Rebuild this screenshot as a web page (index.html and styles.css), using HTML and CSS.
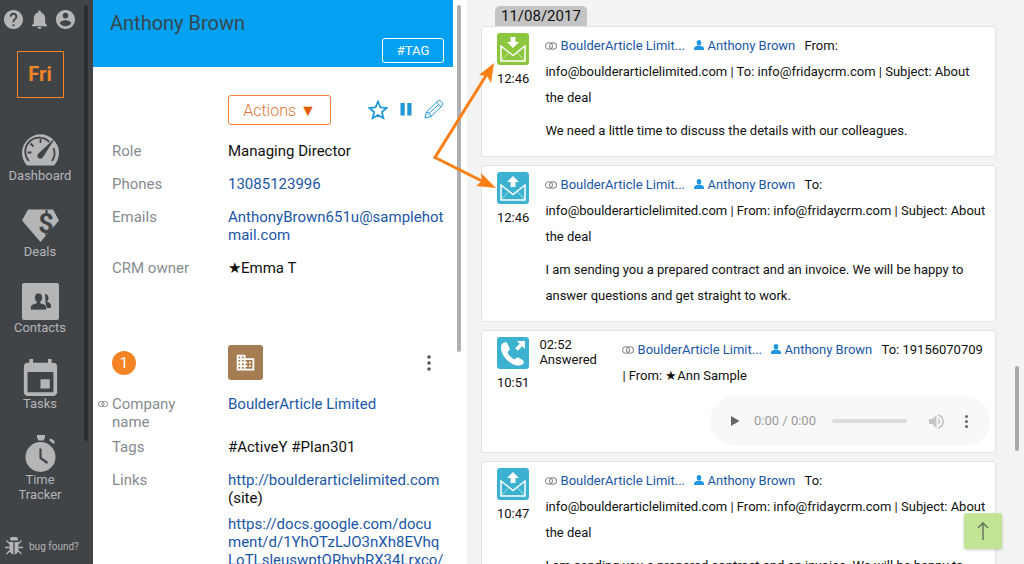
FILE: index.html
```
<!DOCTYPE html>
<html lang="en">
<head>
    <meta charset="UTF-8">
    <meta name="viewport" content="width=device-width, initial-scale=1.0">
    <title>Anthony Brown - Friday CRM</title>
    <link rel="stylesheet" href="styles.css">
</head>
<body>
    <!-- Shared icons -->
    <svg class="sprite" aria-hidden="true">
        <symbol id="link" viewBox="0 0 12 8">
            <rect x="0.6" y="0.8" width="6.8" height="6.4" rx="3.2" fill="none" stroke="currentColor" stroke-width="1.1"/>
            <rect x="4.6" y="0.8" width="6.8" height="6.4" rx="3.2" fill="none" stroke="currentColor" stroke-width="1.1"/>
        </symbol>
        <symbol id="person" viewBox="0 0 10 10">
            <ellipse cx="5" cy="2.700" rx="2.300" ry="2.700" fill="currentColor"/>
            <path d="M0 10V8.500C0 6.800 1.500 6.200 3.500 5.700h3C8.500 6.200 10 6.800 10 8.500V10z" fill="currentColor"/>
        </symbol>
        <symbol id="mail-in" viewBox="0 0 32 32">
            <path d="M4 28l8-9M28 28l-8-9" fill="none" stroke="#fff" stroke-opacity=".5" stroke-width="1"/>
            <path d="M4 13v15h24V13L16 22.500z" fill="none" stroke="#fff" stroke-width="1.500"/>
            <path d="M13.500 4h5v5h3.500l-6 6-6-6h3.500z" fill="#fff"/>
        </symbol>
        <symbol id="mail-out" viewBox="0 0 32 32">
            <path d="M4 28l8-9M28 28l-8-9" fill="none" stroke="#fff" stroke-opacity=".5" stroke-width="1"/>
            <path d="M4 13v15h24V13L16 22.500z" fill="none" stroke="#fff" stroke-width="1.500"/>
            <path d="M13.500 15v-5H10l6-6 6 6h-3.500v5z" fill="#fff"/>
        </symbol>
        <symbol id="more" viewBox="0 0 6 18">
            <circle cx="3" cy="3" r="1.800"/><circle cx="3" cy="9" r="1.800"/><circle cx="3" cy="15" r="1.800"/>
        </symbol>
    </svg>

    <nav class="sidebar">
        <div class="top-icons">
            <button aria-label="Help"><svg viewBox="2 2 20 20"><path d="M12 2C6.480 2 2 6.480 2 12s4.480 10 10 10 10-4.480 10-10S17.520 2 12 2zm1 17h-2v-2h2v2zm2.070-7.750l-.9.920C13.450 12.900 13 13.500 13 15h-2v-.5c0-1.100.45-2.100 1.170-2.830l1.240-1.260c.37-.36.590-.86.590-1.410 0-1.100-.9-2-2-2s-2 .9-2 2H8c0-2.210 1.790-4 4-4s4 1.790 4 4c0 .88-.36 1.680-.93 2.250z"/></svg></button>
            <button aria-label="Notifications"><svg viewBox="2 2 20 20"><path d="M12 22c1.100 0 2-.9 2-2h-4c0 1.100.9 2 2 2zm6-6v-5c0-3.070-1.640-5.640-4.500-6.320V4c0-.83-.67-1.500-1.500-1.500s-1.500.67-1.500 1.500v.68C7.630 5.360 6 7.920 6 11v5l-2 2v1h16v-1l-2-2z"/></svg></button>
            <button aria-label="Account"><svg viewBox="2 2 20 20"><path d="M12 2C6.480 2 2 6.480 2 12s4.480 10 10 10 10-4.480 10-10S17.520 2 12 2zm0 3c1.660 0 3 1.340 3 3s-1.340 3-3 3-3-1.340-3-3 1.340-3 3-3zm0 14.200c-2.500 0-4.710-1.280-6-3.220.03-1.990 4-3.080 6-3.080 1.990 0 5.970 1.090 6 3.080-1.290 1.940-3.500 3.220-6 3.220z"/></svg></button>
        </div>
        <a class="logo" href="#">Fri</a>
        <ul class="menu">
            <li><a href="#">
                <svg viewBox="0 0 37 37">
                    <path d="M5 34.500A18.500 18.500 0 1 1 32 34.500z"/>
                    <g fill="none" stroke="#414447" stroke-width="1.800">
                        <path d="M7 30A13.500 13.500 0 0 1 27.500 11M31.500 17a13.500 13.500 0 0 1 -1.500 13M18.500 8v4M8.500 12.500l3 3M5.500 21.500h4"/>
                    </g>
                    <path d="M33.500 6.500L20.800 26.600a3 3 0 1 1-4.300-4.100z" fill="#414447"/>
                </svg>
                <span>Dashboard</span></a></li>
            <li><a href="#">
                <svg viewBox="0 0 37 37">
                    <path d="M6 2.500h25l6 11L18.500 35 0 13.500z"/>
                    <text x="24" y="26" text-anchor="middle" class="dollar">$</text>
                </svg>
                <span>Deals</span></a></li>
            <li><a href="#">
                <svg viewBox="0 0 37 37">
                    <rect width="37" height="37" rx="2"/>
                    <g fill="#414447">
                        <path d="M23 11c2.200 0 3.500 1.700 3.500 4 0 1.700-.7 3-1.600 3.800 2.600.7 4.100 1.700 4.100 4V25h-5z"/>
                        <path d="M16.500 10c2.500 0 4 2 4 4.500 0 2-.8 3.600-2 4.500v1c3.500.7 6 1.900 6 4.600v2.400h-16v-2.400c0-2.700 2.500-3.900 6-4.600v-1c-1.200-.9-2-2.500-2-4.500 0-2.500 1.500-4.500 4-4.500z" stroke="#b4b5b7" stroke-width=".8"/>
                    </g>
                </svg>
                <span>Contacts</span></a></li>
            <li><a href="#">
                <svg viewBox="3 1 18 20"><path d="M17 12h-5v5h5v-5zM16 1v2H8V1H6v2H5c-1.110 0-1.990.9-1.990 2L3 19c0 1.100.89 2 2 2h14c1.100 0 2-.9 2-2V5c0-1.100-.9-2-2-2h-1V1h-2zm3 18H5V8h14v11z"/></svg>
                <span>Tasks</span></a></li>
            <li><a href="#">
                <svg viewBox="0 0 37 37">
                    <path d="M15 0h8v2.500l-1.500 3h-5L15 2.500z"/>
                    <path d="M27 5l2-1.500 4 3-1.500 2.500z"/>
                    <circle cx="18.500" cy="22" r="15"/>
                    <path d="M18.500 13.500v9.500l7 5" fill="none" stroke="#414447" stroke-width="2.200"/>
                </svg>
                <span>Time Tracker</span></a></li>
        </ul>
        <a class="bug" href="#">
            <svg viewBox="0 0 18 18">
                <path d="M5 3.500a4 4 0 0 1 8 0zM4.500 5H8.400v12.500C5.500 17 4.500 14.500 4.500 11zM9.600 5h3.900v6c0 3.500-1 6-3.900 6.500z"/>
                <path d="M5 7L1.500 3.500M4.500 10.500H0M5 13.500L1.500 17M13 7l3.500-3.500M13.500 10.500H18M13 13.500l3.500 3.500M6.500 2L5.500.5M11.500 2l1-1.500" fill="none" stroke="#b4b5b7" stroke-width="1.300"/>
            </svg>
            <span>bug found?</span></a>
        <div class="thumb"></div>
    </nav>

    <section class="contact">
        <header class="contact-header">
            <h1>Anthony Brown</h1>
            <button class="tag-button">#TAG</button>
        </header>
        <div class="contact-body">
            <div class="toolbar">
                <button class="actions">Actions <span>▼</span></button>
                <div class="tools">
                    <button aria-label="Favourite"><svg viewBox="0 0 20 20"><path d="M10 1.500l2.400 5.900 6.300.5-4.800 4.100 1.500 6.200L10 14.900l-5.400 3.300L6.100 12 1.300 7.900l6.300-.5z" fill="none" stroke="currentColor" stroke-width="1.700"/></svg></button>
                    <button aria-label="Pause"><svg viewBox="0 0 20 20"><path d="M4.500 3h4.200v12.500H4.500zM11.300 3h4.200v12.500h-4.200z" fill="currentColor"/></svg></button>
                    <button aria-label="Edit"><svg viewBox="0 0 20 20"><path d="M1 18l1.500-6L14 .8q1.500-1 3 .5l1.500 1.500q1 1.300 0 2.500L7 16.500zM2.500 12q3 .5 4.500 4.500M12.500 2.300L17 6.800M4.500 14L15 4" fill="none" stroke="currentColor" stroke-width="1"/></svg></button>
                </div>
            </div>
            <dl class="fields">
                <div><dt>Role</dt><dd>Managing Director</dd></div>
                <div><dt>Phones</dt><dd><a href="#">13085123996</a></dd></div>
                <div><dt>Emails</dt><dd><a href="#">AnthonyBrown651u@samplehotmail.com</a></dd></div>
                <div><dt>CRM owner</dt><dd>★Emma T</dd></div>
            </dl>
            <div class="company-bar">
                <span class="count">1</span>
                <a class="company-icon" href="#" aria-label="Company"><svg viewBox="0 0 24 24"><path d="M12 7V3H2v18h20V7H12zM6 19H4v-2h2v2zm0-4H4v-2h2v2zm0-4H4V9h2v2zm0-4H4V5h2v2zm4 12H8v-2h2v2zm0-4H8v-2h2v2zm0-4H8V9h2v2zm0-4H8V5h2v2zm10 12h-8v-2h2v-2h-2v-2h2v-2h-2V9h8v10zm-2-8h-2v2h2v-2zm0 4h-2v2h2v-2z"/></svg></a>
                <button class="more" aria-label="More"><svg><use href="#more"/></svg></button>
            </div>
            <dl class="fields">
                <div class="tight"><dt><svg class="link-icon"><use href="#link"/></svg>Company name</dt><dd><a href="#">BoulderArticle Limited</a></dd></div>
                <div><dt>Tags</dt><dd>#ActiveY #Plan301</dd></div>
                <div><dt>Links</dt><dd>
                    <p><a href="#">http://boulderarticlelimited.com</a> (site)</p>
                    <p><a class="long" href="#">https://docs.google.com/document/d/1YhOTzLJO3nXh8EVhqLoTLsleuswptORhybRX34Lrxco/</a></p>
                </dd></div>
            </dl>
        </div>
        <div class="thumb"></div>
    </section>

    <main class="feed">
        <div class="date">11/08/2017</div>

        <article class="card">
            <div class="event">
                <svg class="incoming"><use href="#mail-in"/></svg>
                <time>12:46</time>
            </div>
            <div class="message">
                <div class="meta">
                    <svg class="link-icon"><use href="#link"/></svg> <a href="#">BoulderArticle Limit...</a>
                    <svg class="person-icon"><use href="#person"/></svg> <a href="#">Anthony Brown</a>
                    <span class="direction">From:</span>
                </div>
                <div>info@boulderarticlelimited.com | To: info@fridaycrm.com | Subject: About the deal</div>
                <p>We need a little time to discuss the details with our colleagues.</p>
            </div>
        </article>

        <article class="card">
            <div class="event">
                <svg><use href="#mail-out"/></svg>
                <time>12:46</time>
            </div>
            <div class="message">
                <div class="meta">
                    <svg class="link-icon"><use href="#link"/></svg> <a href="#">BoulderArticle Limit...</a>
                    <svg class="person-icon"><use href="#person"/></svg> <a href="#">Anthony Brown</a>
                    <span class="direction">To:</span>
                </div>
                <div>info@boulderarticlelimited.com | From: info@fridaycrm.com | Subject: About the deal</div>
                <p>I am sending you a prepared contract and an invoice. We will be happy to answer questions and get straight to work.</p>
            </div>
        </article>

        <article class="card">
            <div class="event">
                <svg viewBox="0 0 32 32">
                    <path d="M5.500 6.500c1.800-1.600 4-1.500 5 .3l2 4.200c.5 1.500-.2 2.700-2 3.800.8 3.500 4 6.600 7.400 7.600 1.400-1.800 2.700-2.200 4.200-1.500l3.600 2.100c1.600 1.200 1.500 3-.4 4.400-2.300 1.700-6 1.500-9.800-.5C8.500 23 3.500 15.800 4 9.500c.1-1.300.6-2.200 1.500-3z" fill="#fff"/>
                    <path d="M20 4h8v8l-2.700-2.700-4.500 4.500-2.600-2.600 4.500-4.500z" fill="#fff"/>
                </svg>
                <time>10:51</time>
            </div>
            <div class="status">02:52 Answered</div>
            <div class="message call">
                <div class="meta">
                    <svg class="link-icon"><use href="#link"/></svg> <a href="#">BoulderArticle Limit...</a>
                    <svg class="person-icon"><use href="#person"/></svg> <a href="#">Anthony Brown</a>
                    <span class="direction">To: 19156070709</span>
                </div>
                <div>| From: ★Ann Sample</div>
                <div class="player">
                    <button aria-label="Play"><svg class="play" viewBox="0 0 10 12"><path d="M1 1l8.500 5L1 11z"/></svg></button>
                    <span class="elapsed">0:00 / 0:00</span>
                    <input type="range" value="0" min="0" max="100" aria-label="Position" disabled>
                    <button class="volume" aria-label="Mute"><svg viewBox="3 3 18 18"><path d="M3 9v6h4l5 5V4L7 9H3zm13.500 3c0-1.770-1.020-3.290-2.500-4.030v8.050c1.480-.73 2.500-2.250 2.500-4.020zM14 3.230v2.060c2.890.86 5 3.540 5 6.710s-2.110 5.850-5 6.710v2.060c4.010-.91 7-4.490 7-8.770s-2.990-7.860-7-8.770z"/></svg></button>
                    <button aria-label="Player options"><svg class="dots"><use href="#more"/></svg></button>
                </div>
            </div>
        </article>

        <article class="card">
            <div class="event">
                <svg><use href="#mail-out"/></svg>
                <time>10:47</time>
            </div>
            <div class="message">
                <div class="meta">
                    <svg class="link-icon"><use href="#link"/></svg> <a href="#">BoulderArticle Limit...</a>
                    <svg class="person-icon"><use href="#person"/></svg> <a href="#">Anthony Brown</a>
                    <span class="direction">To:</span>
                </div>
                <div>info@boulderarticlelimited.com | From: info@fridaycrm.com | Subject: About the deal</div>
                <p>I am sending you a prepared contract and an invoice. We will be happy to answer questions and get straight to work.</p>
            </div>
        </article>

        <!-- Pointer to the incoming and outgoing mail icons -->
        <svg class="pointer" viewBox="0 0 70 130">
            <path d="M59 12L7 95.500l47 23.500" fill="none" stroke="#fb7f14" stroke-width="3"/>
            <path d="M66 1l-3 20-4-7-8-1z" fill="#fb7f14"/>
            <path d="M68 126l-20-2 6-5-1-8z" fill="#fb7f14"/>
        </svg>
        <button class="to-top" aria-label="Back to top"><svg viewBox="0 0 12 20"><path d="M6 19V2M1 7l5-5 5 5" fill="none" stroke="#6f7d62" stroke-width="1.600"/></svg></button>
        <div class="thumb"></div>
    </main>
</body>
</html>
```
FILE: styles.css
```
* {
    box-sizing: border-box;
}

body {
    margin: 0;
    height: 100vh;
    display: flex;
    overflow: hidden;
    font-family: Roboto, "Liberation Sans", sans-serif;
    font-size: 13px;
    color: #111;
    background: #fff;
}

a {
    color: #1a56a8;
    text-decoration: none;
}

button {
    padding: 0;
    border: none;
    background: none;
    font-family: inherit;
    cursor: pointer;
}

svg {
    display: block;
}

p, dl, dd, ul, h1 {
    margin: 0;
    padding: 0;
}

.sprite {
    position: absolute;
    width: 0;
    height: 0;
}

.thumb {
    position: absolute;
    width: 4px;
    border-radius: 2px;
    background: #b0b0b0;
}

/* Sidebar */
.sidebar {
    position: relative;
    flex: 0 0 93px;
    min-width: 0;
    display: flex;
    flex-direction: column;
    padding: 10px 13px 9px 0;
    background: #414447;
    color: #b4b5b7;
    fill: #b4b5b7;
}

.sidebar a {
    color: inherit;
}

.sidebar .thumb {
    top: 5px;
    right: 5px;
    height: 436px;
    background: #2b2d2f;
}

.top-icons {
    display: flex;
    justify-content: space-between;
    padding: 0 5px 0 4px;
}

.top-icons svg {
    width: 19px;
    height: 19px;
    fill: #b4b5b7;
}

.sidebar .logo {
    width: 47px;
    margin: 22px auto 33px;
    border: 1px solid #f58426;
    color: #f58426;
    font-size: 20px;
    font-weight: 700;
    line-height: 45px;
    text-align: center;
}

.menu {
    list-style: none;
    display: flex;
    flex-direction: column;
    gap: 24px;
}

.menu a {
    display: flex;
    flex-direction: column;
    align-items: center;
    line-height: 15px;
    text-align: center;
}

.menu svg {
    height: 37px;
    width: 37px;
}

.menu span {
    width: min-content;
}

.dollar {
    font-size: 27px;
    font-weight: 700;
    fill: #414447;
}

.bug {
    display: flex;
    align-items: center;
    gap: 6px;
    margin: auto 0 0 5px;
    font-size: 10px;
    white-space: nowrap;
}

.bug svg {
    flex: none;
    width: 18px;
    height: 18px;
}

/* Contact details */
.contact {
    position: relative;
    flex: 0 0 374px;
    padding-right: 14px;
    overflow: hidden;
}

.contact > .thumb {
    top: 5px;
    right: 6px;
    height: 347px;
}

.contact-header {
    height: 67px;
    padding: 9px 9px 4px 17px;
    display: flex;
    justify-content: space-between;
    background: #03a1f1;
}

.contact-header h1 {
    color: #37474f;
    font-size: 20px;
    font-weight: 400;
    line-height: 28px;
}

.tag-button {
    align-self: flex-end;
    width: 62px;
    height: 25px;
    border: 1px solid #fff;
    border-radius: 3px;
    color: #fff;
    font-size: 13px;
}

.contact-body {
    padding: 28px 9px 0 19px;
}

.toolbar {
    display: flex;
    justify-content: space-between;
    align-items: center;
    margin: 0 0 17px 116px;
}

.actions {
    width: 103px;
    height: 30px;
    border: 1px solid #f0813a;
    border-radius: 3px;
    color: #e0763a;
    font-size: 16px;
    font-weight: 300;
}

.actions span {
    color: #e65c00;
}

.tools {
    display: flex;
    gap: 8px;
    color: #1e96d8;
}

.tools button {
    color: inherit;
}

.tools svg {
    width: 20px;
    height: 20px;
}

.fields {
    font-size: 15px;
    line-height: 18px;
}

.fields > div {
    display: flex;
    margin-bottom: 15px;
}

.fields > .tight {
    margin-bottom: 7px;
}

.fields dt {
    position: relative;
    flex: 0 0 116px;
    padding-right: 36px;
    color: #868b91;
    white-space: nowrap;
}

.fields .tight dt {
    white-space: normal;
}

.fields dd {
    flex: 1;
    min-width: 0;
    overflow-wrap: anywhere;
}

.fields p {
    margin-bottom: 8px;
}

.fields .long {
    word-break: break-all;
}

.fields .link-icon {
    position: absolute;
    top: 5px;
    left: -14px;
    width: 10px;
}

.company-bar {
    display: flex;
    align-items: center;
    margin: 68px 12px 15px 0;
}

.count {
    width: 24px;
    margin-right: 92px;
    border-radius: 50%;
    background: #f58426;
    color: #fff;
    font-size: 15px;
    line-height: 24px;
    text-align: center;
}

.company-icon {
    padding: 7px;
    border-radius: 3px;
    background: #a67c52;
    fill: #fff;
}

.company-icon svg {
    width: 21px;
    height: 21px;
}

.more {
    margin-left: auto;
    fill: #555;
}

.more svg {
    width: 6px;
    height: 18px;
}

/* Activity feed */
.feed {
    position: relative;
    flex: 1;
    min-width: 0;
    padding: 6px 28px 0 14px;
    background: #f3f3f3;
}

.feed > .thumb {
    top: 366px;
    right: 5px;
    height: 85px;
    background: #a9a9a9;
}

.date {
    width: max-content;
    margin-left: 14px;
    padding: 0 6px;
    border-radius: 5px 5px 0 0;
    background: #c4c4c4;
    font-size: 15px;
    line-height: 20px;
}

.card {
    display: flex;
    margin-bottom: 8px;
    padding: 6px 5px 6px 15px;
    border: 1px solid #e3e3e3;
    border-radius: 3px;
    background: #fff;
}

.event {
    flex: 0 0 32px;
}

.event svg {
    width: 32px;
    height: 32px;
    border-radius: 3px;
    background: #3db2d0;
}

.event .incoming {
    background: #8cc63f;
}

.event time {
    display: block;
    margin-top: 6px;
    line-height: 16px;
}

.status {
    flex: 0 0 83px;
    margin-left: 10px;
    padding-right: 20px;
    line-height: 15px;
}

.message {
    flex: 1;
    min-width: 0;
    margin-left: 16px;
    line-height: 26px;
}

.message.call {
    margin-left: 0;
}

.message p {
    margin: 7px 0 6px;
}

.link-icon {
    width: 12px;
    height: 8px;
    color: #888;
}

.meta svg {
    display: inline-block;
}

.person-icon {
    width: 10px;
    height: 10px;
    margin-left: 6px;
    color: #1e96e0;
}

.direction {
    margin-left: 6px;
}

.player {
    display: flex;
    align-items: center;
    width: 280px;
    height: 50px;
    margin: 7px 0 0 auto;
    padding: 0 21px 0 20px;
    border-radius: 25px;
    background: #f7f8f8;
    fill: #666;
}

.play {
    width: 10px;
    height: 12px;
}

.elapsed {
    margin: 0 16px 0 14px;
    color: #9a9a9a;
    white-space: nowrap;
}

.player input {
    flex: 1;
    min-width: 0;
    height: 4px;
    margin: 0;
    border-radius: 2px;
    background: #dcdddd;
    appearance: none;
}

.player input::-webkit-slider-thumb {
    appearance: none;
    width: 0;
    height: 0;
}

.volume {
    margin: 0 20px 0 22px;
    fill: #c4c5c5;
}

.volume svg {
    width: 15px;
    height: 15px;
}

.dots {
    width: 5px;
    height: 15px;
}

.pointer {
    position: absolute;
    top: 62px;
    left: -39px;
    width: 70px;
    height: 130px;
}

.to-top {
    position: absolute;
    right: 22px;
    bottom: 15px;
    display: flex;
    align-items: center;
    justify-content: center;
    width: 38px;
    height: 36px;
    border-radius: 3px;
    background: rgba(182, 224, 130, 0.85);
    box-shadow: 0 1px 3px rgba(0, 0, 0, 0.2);
}

.to-top svg {
    width: 12px;
    height: 20px;
}
```
